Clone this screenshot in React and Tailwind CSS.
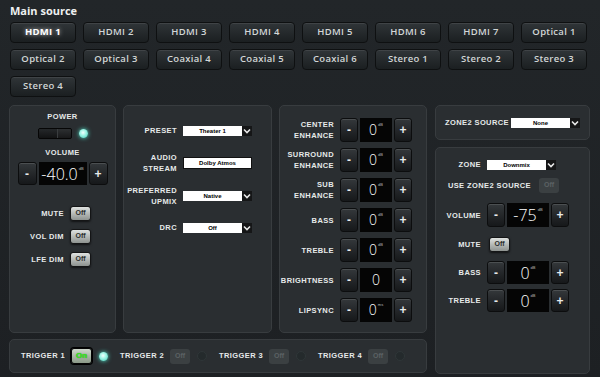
import React from "react";

const F = { fontFamily: '"Liberation Sans", Arial, sans-serif' };
const OS = { fontFamily: '"Open Sans", "Liberation Sans", sans-serif' };

const sources = [
  "HDMI 1","HDMI 2","HDMI 3","HDMI 4","HDMI 5","HDMI 6","HDMI 7","Optical 1",
  "Optical 2","Optical 3","Coaxial 4","Coaxial 5","Coaxial 6","Stereo 1","Stereo 2","Stereo 3",
  "Stereo 4",
];

function Label({ children, className = "" }) {
  return (
    <div className={"text-[7.5px] leading-[11px] font-bold text-[#e6eaea] uppercase text-right tracking-[0.4px] " + className}>
      {children}
    </div>
  );
}

function StepBtn({ children, w = "w-[18px]" }) {
  return (
    <div className={w + " h-full rounded-[3px] border border-[#0c0d0e] bg-gradient-to-b from-[#34383b] to-[#16181a] shadow-[inset_0_1px_0_rgba(255,255,255,0.12)] flex items-center justify-center text-[#e8eaea] text-[12px] font-bold"}>
      {children}
    </div>
  );
}

function Stepper({ value, unit, h = "h-[24px]", disp = "w-[32px]", btn = "w-[18px]", size = "text-[14px]" }) {
  return (
    <div className={"flex gap-[2px] " + h}>
      <StepBtn w={btn}>-</StepBtn>
      <div className={disp + " h-full bg-[#050505] flex items-center justify-center relative"}>
        <span className={size + " font-light text-white leading-none"} style={OS}>{value}</span>
        {unit && <span className="text-[4px] text-[#bbb] leading-none self-start mt-[5px] ml-[1px]">{unit}</span>}
      </div>
      <StepBtn w={btn}>+</StepBtn>
    </div>
  );
}

function OffBtn({ disabled, on }) {
  if (disabled)
    return (
      <div className="w-[20px] h-[15px] rounded-[3px] bg-[#3b4042] flex items-center justify-center text-[7px] font-bold text-[#5c6264]">Off</div>
    );
  if (on)
    return (
      <div className="w-[21px] h-[16px] rounded-[3px] border border-[#050505] bg-gradient-to-b from-[#cfd8cc] to-[#8a9887] flex items-center justify-center shadow-[0_0_0_1px_#000]">
        <span className="text-[8px] font-bold leading-none text-[#36f21f] [text-shadow:0_0_1px_#1a6a10]">On</span>
      </div>
    );
  return (
    <div className="w-[21px] h-[15px] rounded-[3px] border border-[#141516] bg-gradient-to-b from-[#dfe2e0] to-[#8e9390] flex items-center justify-center text-[7px] font-bold text-[#2a2c2c] shadow-[0_1px_2px_rgba(0,0,0,0.6)]">Off</div>
  );
}

function Select({ text }) {
  return (
    <div className="flex h-[10px]">
      <div className="w-[59px] h-full bg-white flex items-center justify-center text-[6px] font-bold text-black leading-none">{text}</div>
      <div className="w-[10px] h-full bg-[#151617] flex items-center justify-center">
        <svg width="8" height="6" viewBox="0 0 8 6"><path d="M1 1.5 L4 4.5 L7 1.5" stroke="#e8e8e8" strokeWidth="1.6" fill="none" /></svg>
      </div>
    </div>
  );
}

function Led({ on }) {
  return on ? (
    <div className="w-[9px] h-[9px] rounded-full bg-[radial-gradient(circle_at_45%_40%,#f2fffd_0%,#9ff5e6_40%,#3ec9b3_100%)] shadow-[0_0_4px_#4fe3cc]" />
  ) : (
    <div className="w-[10px] h-[10px] rounded-full bg-[#242a2c] border border-[#2f3638]" />
  );
}

const panel = "rounded-[5px] border border-[#383c3f] bg-[#2a2e31]";

export default function App() {
  return (
    <div className="w-[600px] h-[377px] overflow-hidden bg-gradient-to-b from-[#222629] to-[#1d2023] text-white" style={F}>
      <div className="pl-[10px] pt-[5px] text-[11px] leading-[12px] font-bold text-[#eef0f0]" style={OS}>Main source</div>
      <div className="grid grid-cols-[repeat(8,66px)] auto-rows-[21px] gap-x-[7px] gap-y-[6px] ml-[10px] mt-[5px]">
        {sources.map((s, i) => (
          <div
            key={s}
            style={OS}
            className={
              "rounded-[4px] border border-[#0e1011] bg-gradient-to-b from-[#303538] to-[#1b1f21] shadow-[inset_0_1px_0_rgba(255,255,255,0.08)] flex items-center justify-center text-[9.5px] tracking-[0.3px] " +
              (i === 0 ? "font-bold text-white [text-shadow:0_0_4px_rgba(255,255,255,0.7)]" : "font-semibold text-[#d2d6d6]")
            }
          >
            {s}
          </div>
        ))}
      </div>

      <div className="flex ml-[9px] mt-[8px] gap-[8px]">
        <div className="w-[418px] flex flex-col gap-[6px]">
          <div className="flex gap-[7px] h-[228px]">
            {/* Panel 1 */}
            <div className={panel + " w-[107px] flex flex-col items-center pt-[5px]"}>
              <Label className="text-center">Power</Label>
              <div className="flex items-center gap-[7px] mt-[6px] ml-[1px]">
                <div className="w-[34px] h-[11px] rounded-[2px] bg-[#0f1011] border border-[#060606] flex overflow-hidden">
                  <div className="w-[18px] h-full bg-gradient-to-b from-[#25282a] to-[#121314]" />
                  <div className="w-[1px] h-full bg-[#3a3d3f]" />
                  <div className="flex-1 h-full bg-gradient-to-b from-[#2d3032] to-[#18191a]" />
                </div>
                <Led on />
              </div>
              <Label className="text-center mt-[8px]">Volume</Label>
              <div className="mt-[4px]">
                <Stepper value="-40.0" unit="dB" h="h-[23px]" disp="w-[48px]" btn="w-[19px]" size="text-[16px]" />
              </div>
              <div className="flex flex-col gap-[8px] mt-[21px] self-start">
                {["Mute", "Vol Dim", "Lfe Dim"].map((l) => (
                  <div key={l} className="flex items-center">
                    <Label className="w-[54px]">{l}</Label>
                    <div className="ml-[6px]"><OffBtn /></div>
                  </div>
                ))}
              </div>
            </div>
            {/* Panel 2 */}
            <div className={panel + " w-[149px] flex flex-col pt-[19px]"}>
              <div className="flex items-center">
                <Label className="w-[53px]">Preset</Label>
                <div className="ml-[6px]"><Select text="Theater 1" /></div>
              </div>
              <div className="flex items-center mt-[16px]">
                <Label className="w-[53px]">Audio<br />Stream</Label>
                <div className="ml-[6px] w-[69px] h-[12px] bg-white border border-[#111] flex items-center justify-center text-[6px] font-bold text-black">Dolby Atmos</div>
              </div>
              <div className="flex items-center mt-[11px]">
                <Label className="w-[53px]">Preferred<br />Upmix</Label>
                <div className="ml-[6px]"><Select text="Native" /></div>
              </div>
              <div className="flex items-center mt-[15px]">
                <Label className="w-[53px]">DRC</Label>
                <div className="ml-[6px]"><Select text="Off" /></div>
              </div>
            </div>
            {/* Panel 3 */}
            <div className={panel + " w-[148px] flex flex-col gap-[6px] pt-[12px]"}>
              {[
                ["Center<br>Enhance", "0", "dB"],
                ["Surround<br>Enhance", "0", "dB"],
                ["Sub<br>Enhance", "0", "dB"],
                ["Bass", "0", "dB"],
                ["Treble", "0", "dB"],
                ["Brightness", "0", null],
                ["Lipsync", "0", "ms"],
              ].map(([l, v, u]) => (
                <div key={l} className="flex items-center">
                  <Label className="w-[54px]">
                    {l.split("<br>").map((p, i) => (
                      <div key={i}>{p}</div>
                    ))}
                  </Label>
                  <div className="ml-[6px]"><Stepper value={v} unit={u} /></div>
                </div>
              ))}
            </div>
          </div>
          {/* Trigger panel */}
          <div className={panel + " h-[34px] flex items-center pl-[11px]"}>
            {[1, 2, 3, 4].map((n) => (
              <div key={n} className="flex items-center w-[99px]">
                <div className="text-[7.5px] font-bold tracking-[0.4px] text-[#e6eaea] whitespace-nowrap">TRIGGER {n}</div>
                <div className="ml-[6px]"><OffBtn on={n === 1} disabled={n !== 1} /></div>
                <div className="ml-[7px]"><Led on={n === 1} /></div>
              </div>
            ))}
          </div>
        </div>
        <div className="w-[155px] flex flex-col gap-[7px]">
          <div className={panel + " h-[35px] flex items-center pl-[9px]"}>
            <Label>Zone2 Source</Label>
            <div className="ml-[2px]"><Select text="None" /></div>
          </div>
          <div className={panel + " h-[227px] flex flex-col pt-[11px]"}>
            <div className="flex items-center">
              <Label className="w-[45px]">Zone</Label>
              <div className="ml-[6px]"><Select text="Downmix" /></div>
            </div>
            <div className="flex items-center mt-[8px]">
              <Label className="w-[95px]">Use Zone2 Source</Label>
              <div className="ml-[8px]"><OffBtn disabled /></div>
            </div>
            <div className="flex items-center mt-[10px]">
              <Label className="w-[45px]">Volume</Label>
              <div className="ml-[6px]"><Stepper value="-75" unit="dB" disp="w-[42px]" size="text-[16px]" /></div>
            </div>
            <div className="flex items-center mt-[10px]">
              <Label className="w-[45px]">Mute</Label>
              <div className="ml-[8px]"><OffBtn /></div>
            </div>
            <div className="flex items-center mt-[9px]">
              <Label className="w-[45px]">Bass</Label>
              <div className="ml-[6px]"><Stepper value="0" unit="dB" disp="w-[42px]" h="h-[23px]" size="text-[16px]" /></div>
            </div>
            <div className="flex items-center mt-[5px]">
              <Label className="w-[45px]">Treble</Label>
              <div className="ml-[6px]"><Stepper value="0" unit="dB" disp="w-[42px]" h="h-[23px]" size="text-[16px]" /></div>
            </div>
          </div>
        </div>
      </div>
    </div>
  );
}
